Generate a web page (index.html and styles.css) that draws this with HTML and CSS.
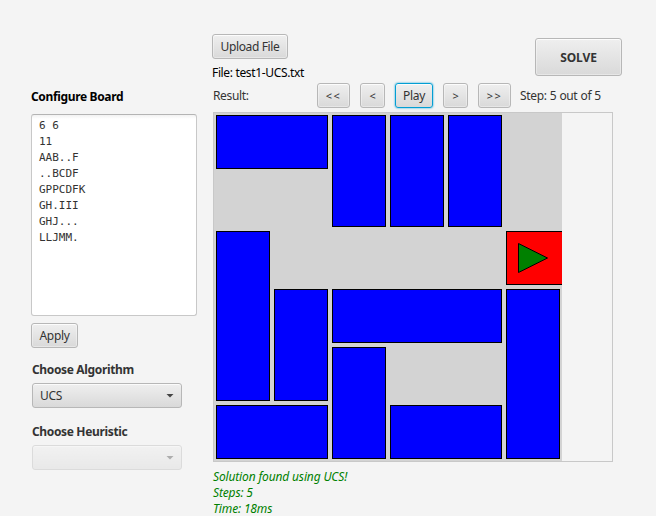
FILE: index.html
```html
<!DOCTYPE html>
<html lang="en">
<head>
<meta charset="utf-8">
<title>Rush Hour Solver</title>
<link rel="stylesheet" href="styles.css">
</head>
<body>
<div class="app">
  <aside class="config">
    <h2 class="heading heading-board">Configure Board</h2>
    <pre class="editor">6 6
11
AAB..F
..BCDF
GPPCDFK
GH.III
GHJ...
LLJMM.</pre>
    <button class="btn apply">Apply</button>
    <h2 class="heading choice">Choose Algorithm</h2>
    <div class="combo"><span>UCS</span><i class="arrow"></i></div>
    <h2 class="heading choice second">Choose Heuristic</h2>
    <div class="combo disabled"><span></span><i class="arrow"></i></div>
  </aside>
  <main class="result">
    <header class="top">
      <div class="file">
        <button class="btn upload">Upload File</button>
        <p class="filename">File: test1-UCS.txt</p>
      </div>
      <button class="btn solve">SOLVE</button>
    </header>
    <div class="controls">
      <span class="result-label">Result:</span>
      <button class="btn wide">&lt;&lt;</button>
      <button class="btn narrow">&lt;</button>
      <button class="btn play">Play</button>
      <button class="btn narrow">&gt;</button>
      <button class="btn wide">&gt;&gt;</button>
      <span class="step">Step: 5 out of 5</span>
    </div>
    <section class="board-frame">
      <div class="board">
        <div class="piece a"></div>
        <div class="piece b"></div>
        <div class="piece c"></div>
        <div class="piece d"></div>
        <div class="piece g"></div>
        <div class="piece h"></div>
        <div class="piece i"></div>
        <div class="piece f"></div>
        <div class="piece j"></div>
        <div class="piece l"></div>
        <div class="piece m"></div>
        <div class="piece primary">
          <svg width="54" height="52" viewBox="0 0 54 52"><path d="M11.5 11.5 40.5 26 11.5 40.5Z" fill="#008000" stroke="#000"/></svg>
        </div>
      </div>
    </section>
    <div class="status">
      <p class="s1">Solution found using UCS!</p>
      <p class="s2">Steps: 5</p>
      <p class="s3">Time: 18ms</p>
    </div>
  </main>
</div>
</body>
</html>
```
FILE: styles.css
```css
* { box-sizing: border-box; }
body {
  margin: 0;
  background: #f4f4f4;
  color: #333;
  font: 12px/16px "Noto Sans", "Open Sans", sans-serif;
  letter-spacing: -0.35px;
  overflow: hidden;
}
h2, p, pre { margin: 0; }
.app { display: flex; height: 516px; overflow: hidden; }
.config { width: 166px; margin-left: 31px; padding-top: 89px; flex: none; }
.result { width: 410px; margin-left: 15px; padding-top: 34px; flex: none; }

.btn {
  display: block;
  height: 25px;
  padding: 0;
  border: 1px solid #b7b7b7;
  border-radius: 3px;
  background: linear-gradient(#efefef, #d9d9d9);
  box-shadow: inset 0 0 0 1px rgba(255, 255, 255, .35), inset 0 1px 0 #fbfbfb;
  color: #333;
  font: inherit;
  letter-spacing: inherit;
  text-align: center;
  white-space: nowrap;
}
.heading { font-size: 12px; font-weight: 700; line-height: 16px; letter-spacing: -0.35px; white-space: nowrap; }
.heading-board { color: #000; }
.editor {
  height: 202px;
  margin-top: 9px;
  padding: 3px 7px;
  border: 1px solid #c8c8c8;
  border-top-color: #b4b4b4;
  border-radius: 3px;
  background: linear-gradient(#f2f2f2, #fff 4px);
  font: 11px/16px "DejaVu Sans Mono", monospace;
  letter-spacing: 0;
}
.apply { width: 47px; margin-top: 7px; }
.choice { margin: 14px 0 0 1px; }
.second { margin-top: 16px; }
.combo {
  display: flex;
  align-items: center;
  justify-content: space-between;
  width: 150px;
  height: 25px;
  margin: 5px 0 0 1px;
  padding: 0 7px;
  border: 1px solid #b7b7b7;
  border-radius: 3px;
  background: linear-gradient(#efefef, #d9d9d9);
  box-shadow: inset 0 1px 0 #fbfbfb;
}
.disabled { opacity: .4; }
.arrow { width: 8px; height: 4px; background: #444; clip-path: polygon(0 0, 100% 0, 50% 100%); }

.top { display: flex; justify-content: space-between; height: 49px; }
.upload { width: 76px; }
.filename { margin-top: 6px; color: #000; }
.solve { width: 87px; height: 38px; margin-top: 4px; padding-top: 2px; font-weight: 700; letter-spacing: -0.1px; }
.controls { display: flex; align-items: center; gap: 10px; height: 25px; }
.result-label { flex: none; width: 95px; padding-left: 1px; }
.wide { flex: none; width: 33px; font-size: 11px; letter-spacing: 1.5px; }
.narrow { flex: none; width: 25px; font-size: 11px; }
.play { flex: none; width: 38px; border-color: #039ed3; box-shadow: 0 0 2px #039ed3, inset 0 1px 0 #fbfbfb; }
.step { margin-left: -1px; white-space: nowrap; word-spacing: 0.4px; }

.board-frame { width: 400px; height: 350px; margin: 4px 0 0 1px; border: 1px solid #c8c8c8; }
.board {
  display: grid;
  grid-template: repeat(6, 58px) / repeat(6, 58px);
  width: 348px;
  height: 348px;
  background: #d3d3d3;
}
.piece { margin: 2px; border: 1px solid #000; background: #00f; }
.a { grid-area: 1 / 1 / 2 / 3; }
.b { grid-area: 1 / 3 / 3 / 4; }
.c { grid-area: 1 / 4 / 3 / 5; }
.d { grid-area: 1 / 5 / 3 / 6; }
.g { grid-area: 3 / 1 / 6 / 2; }
.h { grid-area: 4 / 2 / 6 / 3; }
.i { grid-area: 4 / 3 / 5 / 6; }
.f { grid-area: 4 / 6 / 7 / 7; }
.j { grid-area: 5 / 3 / 7 / 4; }
.l { grid-area: 6 / 1 / 7 / 3; }
.m { grid-area: 6 / 4 / 7 / 6; }
.primary { grid-area: 3 / 6 / 4 / 7; margin-right: 0; border-right: 0; background: #f00; }
.primary svg { display: block; }
.status { margin: 7px 0 0 1px; color: #008000; font-style: italic; letter-spacing: -0.15px; white-space: nowrap; }
```
